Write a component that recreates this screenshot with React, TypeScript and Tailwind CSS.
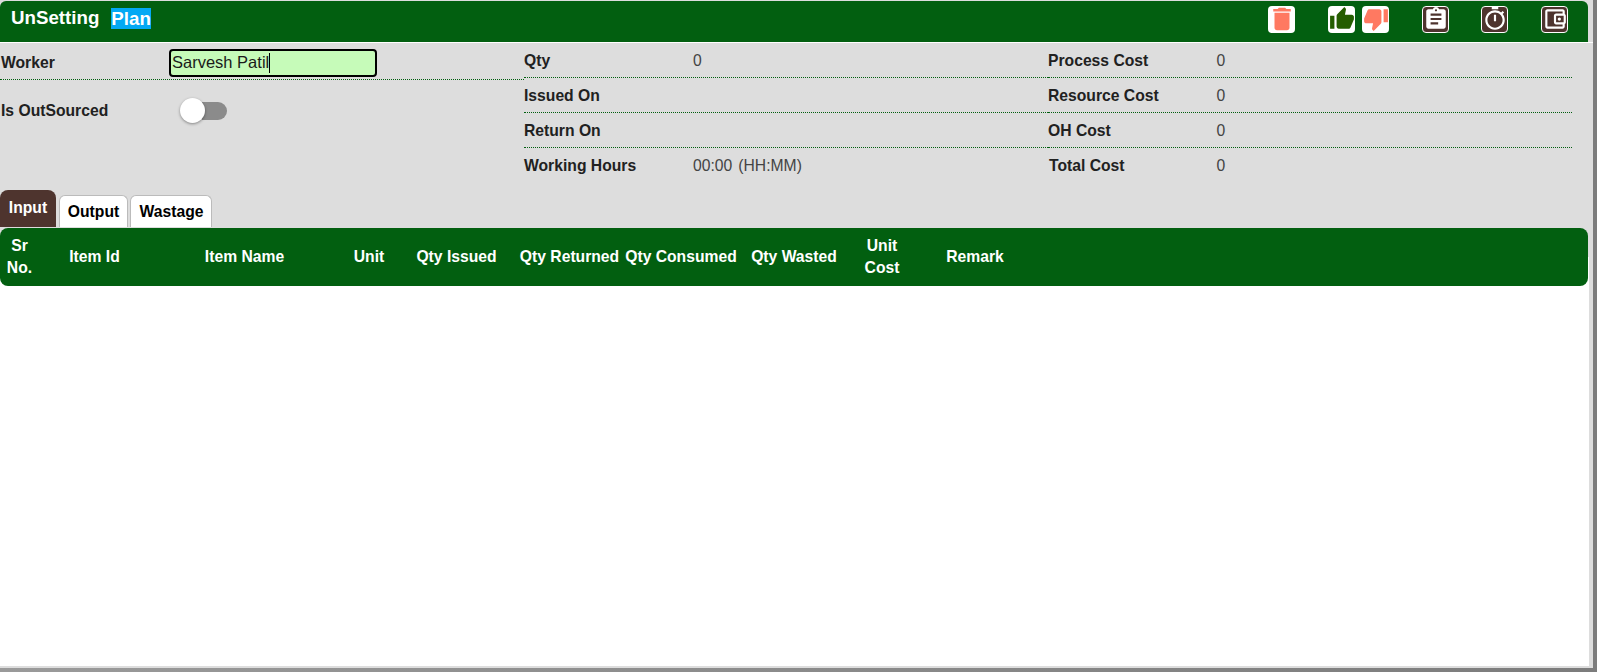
import React from 'react';

const GREEN = 'bg-[#025f10]';

const IconButton = ({ d, fill, dark, size = 26, children }: { d?: string; fill: string; dark?: boolean; size?: number; children?: React.ReactNode }) => (
  <div
    className={`flex items-center justify-center w-[27px] h-[27px] rounded-[4px] overflow-hidden ${
      dark ? 'bg-[#4e342e] border border-white' : 'bg-white'
    }`}
  >
    <svg viewBox="0 0 24 24" width={size} height={size} fill={fill} className="shrink-0">
      {d && <path d={d} />}
      {children}
    </svg>
  </div>
);

const InfoRow = ({ label, value, last, labelClass }: { label: string; value?: React.ReactNode; last?: boolean; labelClass?: string }) => (
  <div className={`flex items-center h-[35px] ${last ? '' : 'pt-px border-b border-dotted border-[#025f10]'}`}>
    <div className={`font-bold text-[#212121] ${labelClass ?? 'w-[169px]'}`}>{label}</div>
    <div className="text-[#444]">{value}</div>
  </div>
);

const columns = [
  { label: 'Sr No.', width: 'w-[39px]' },
  { label: 'Item Id', width: 'w-[111px]' },
  { label: 'Item Name', width: 'w-[189px]' },
  { label: 'Unit', width: 'w-[60px]' },
  { label: 'Qty Issued', width: 'w-[115px]' },
  { label: 'Qty Returned', width: 'w-[111px]' },
  { label: 'Qty Consumed', width: 'w-[112px]' },
  { label: 'Qty Wasted', width: 'w-[114px]' },
  { label: 'Unit Cost', width: 'w-[62px]' },
  { label: 'Remark', width: 'w-[124px]' },
];

export default function App() {
  return (
    <div className="h-screen bg-gradient-to-r from-[#9a9a9a] to-[#7c7c7c] pr-[4px] pb-[4px] font-['Liberation_Sans',Arial,sans-serif] text-[15.7px] overflow-hidden">
      <div className="flex flex-col h-full bg-[#dddddd] pb-[2px]">
        {/* Title bar */}
        <div className="pr-[5px] pt-px">
          <div className={`flex items-center justify-between h-[41px] rounded-t-[6px] ${GREEN}`}>
            <div className="flex items-center pl-[11px] pb-[6px] text-white font-bold text-[18.72px]">
              <span>UnSetting</span>
              <span className="ml-[12px] h-[21px] leading-[21px] bg-[#03a9f4]">Plan</span>
            </div>
            <div className="flex items-center pr-[20px] pb-[5px]">
              <IconButton fill="#ff7961" size={30} d="M6 19c0 1.1.9 2 2 2h8c1.1 0 2-.9 2-2V7H6v12zM19 4h-3.5l-1-1h-5l-1 1H5v2h14V4z" />
              <div className="ml-[33px]">
                <IconButton fill="#255d00" d="M1 21h4V9H1v12zm22-11c0-1.1-.9-2-2-2h-6.31l.95-4.57.03-.32c0-.41-.17-.79-.44-1.06L14.17 1 7.59 7.59C7.22 7.95 7 8.45 7 9v10c0 1.1.9 2 2 2h9c.83 0 1.54-.5 1.84-1.22l3.02-7.05c.09-.23.14-.47.14-.73v-2z" />
              </div>
              <div className="ml-[7px]">
                <IconButton fill="#ff7961" d="M15 3H6c-.83 0-1.54.5-1.84 1.22l-3.02 7.05c-.09.23-.14.47-.14.73v2c0 1.1.9 2 2 2h6.31l-.95 4.57-.03.32c0 .41.17.79.44 1.06L9.83 23l6.59-6.59c.36-.36.58-.86.58-1.41V5c0-1.1-.9-2-2-2zm4 0v12h4V3h-4z" />
              </div>
              <div className="ml-[33px]">
                <IconButton dark fill="#ffffff" d="M19 3h-4.18C14.4 1.84 13.3 1 12 1c-1.3 0-2.4.84-2.82 2H5c-1.1 0-2 .9-2 2v14c0 1.1.9 2 2 2h14c1.1 0 2-.9 2-2V5c0-1.1-.9-2-2-2zm-7 0c.55 0 1 .45 1 1s-.45 1-1 1-1-.45-1-1 .45-1 1-1zm2 14H7v-2h7v2zm3-4H7v-2h10v2zm0-4H7V7h10v2z" />
              </div>
              <div className="ml-[32px]">
                <IconButton dark fill="#ffffff" d="M15 1H9v2h6V1zm-4 13h2V8h-2v6zm8.03-6.61l1.42-1.42c-.43-.51-.9-.99-1.41-1.41l-1.42 1.42C16.07 4.74 14.12 4 12 4c-4.97 0-9 4.03-9 9s4.02 9 9 9 9-4.03 9-9c0-2.12-.74-4.07-1.97-5.61zM12 20c-3.87 0-7-3.13-7-7s3.13-7 7-7 7 3.13 7 7-3.13 7-7 7z" />
              </div>
              <div className="ml-[33px]">
                <IconButton dark fill="#ffffff" d="M21 7.28V5c0-1.1-.9-2-2-2H5c-1.11 0-2 .9-2 2v14c0 1.1.89 2 2 2h14c1.1 0 2-.9 2-2v-2.28c.59-.35 1-.98 1-1.72V9c0-.74-.41-1.37-1-1.72zM20 9v6h-7V9h7zM5 19V5h14v2h-6c-1.1 0-2 .9-2 2v6c0 1.1.9 2 2 2h6v2H5z">
                  <circle cx="16" cy="12" r="1.5" />
                </IconButton>
              </div>
            </div>
          </div>
        </div>

        {/* Info panel */}
        <div className="flex border-t border-white h-[148px] shrink-0">
          <div className="w-[524px] shrink-0">
            <div className="flex items-center h-[37px] pl-px pt-[3px] border-b border-dotted border-[#025f10]">
              <div className="w-[168px] font-bold text-[#212121]">Worker</div>
              <div className="flex items-center w-[208px] h-[28px] pl-px rounded-[4px] border-2 border-black bg-[#c6fbb9] text-[16.5px] text-[#1a1a1a]">
                Sarvesh Patil
                <span className="w-px h-[20px] bg-black" />
              </div>
            </div>
            <div className="flex items-center h-[59px] pl-px pt-[2px]">
              <div className="w-[179px] font-bold text-[#212121]">Is OutSourced</div>
              <div className="flex items-center">
                <div className="relative w-[25px] h-[25px] rounded-full bg-white shadow-[0_1px_3px_rgba(0,0,0,0.4)]" />
                <div className="-ml-[3px] w-[25px] h-[18px] rounded-r-full bg-[#8b8b8b]" />
              </div>
            </div>
          </div>
          <div className="w-[524px] shrink-0">
            <InfoRow label="Qty" value="0" />
            <InfoRow label="Issued On" />
            <InfoRow label="Return On" />
            <InfoRow
              label="Working Hours"
              value={
                <>
                  00:00<span className="ml-[6px]">(HH:MM)</span>
                </>
              }
              last
            />
          </div>
          <div className="w-[524px] shrink-0">
            <InfoRow label="Process Cost" value="0" labelClass="w-[168.5px]" />
            <InfoRow label="Resource Cost" value="0" labelClass="w-[168.5px]" />
            <InfoRow label="OH Cost" value="0" labelClass="w-[168.5px]" />
            <InfoRow label="Total Cost" value="0" last labelClass="w-[168.5px] pl-px" />
          </div>
        </div>

        {/* Tabs */}
        <div className="flex items-end h-[37px] mb-px shrink-0">
          <div className="flex items-center justify-center w-[56px] h-[37px] pb-[2px] rounded-t-[8px] bg-[#4e342e] text-white font-bold">Input</div>
          <div className="ml-[3px] flex items-center justify-center w-[69px] h-[32px] rounded-t-[6px] border border-b-0 border-[#bbbbbb] bg-white text-black font-bold">Output</div>
          <div className="ml-[2px] flex items-center justify-center w-[82px] h-[32px] pl-px rounded-t-[6px] border border-b-0 border-[#bbbbbb] bg-white text-black font-bold">Wastage</div>
        </div>

        {/* Table */}
        <div className="flex-1 mr-[4px] bg-[linear-gradient(#dddddd_0,#dddddd_29px,#ffffff_29px)]">
          <div className={`flex items-center h-[58px] mr-px rounded-[8px] ${GREEN}`}>
            {columns.map((col) => (
              <div key={col.label} className={`${col.width} shrink-0 text-center text-white font-bold leading-[21.6px]`}>
                {col.label}
              </div>
            ))}
          </div>
        </div>
      </div>
    </div>
  );
}
